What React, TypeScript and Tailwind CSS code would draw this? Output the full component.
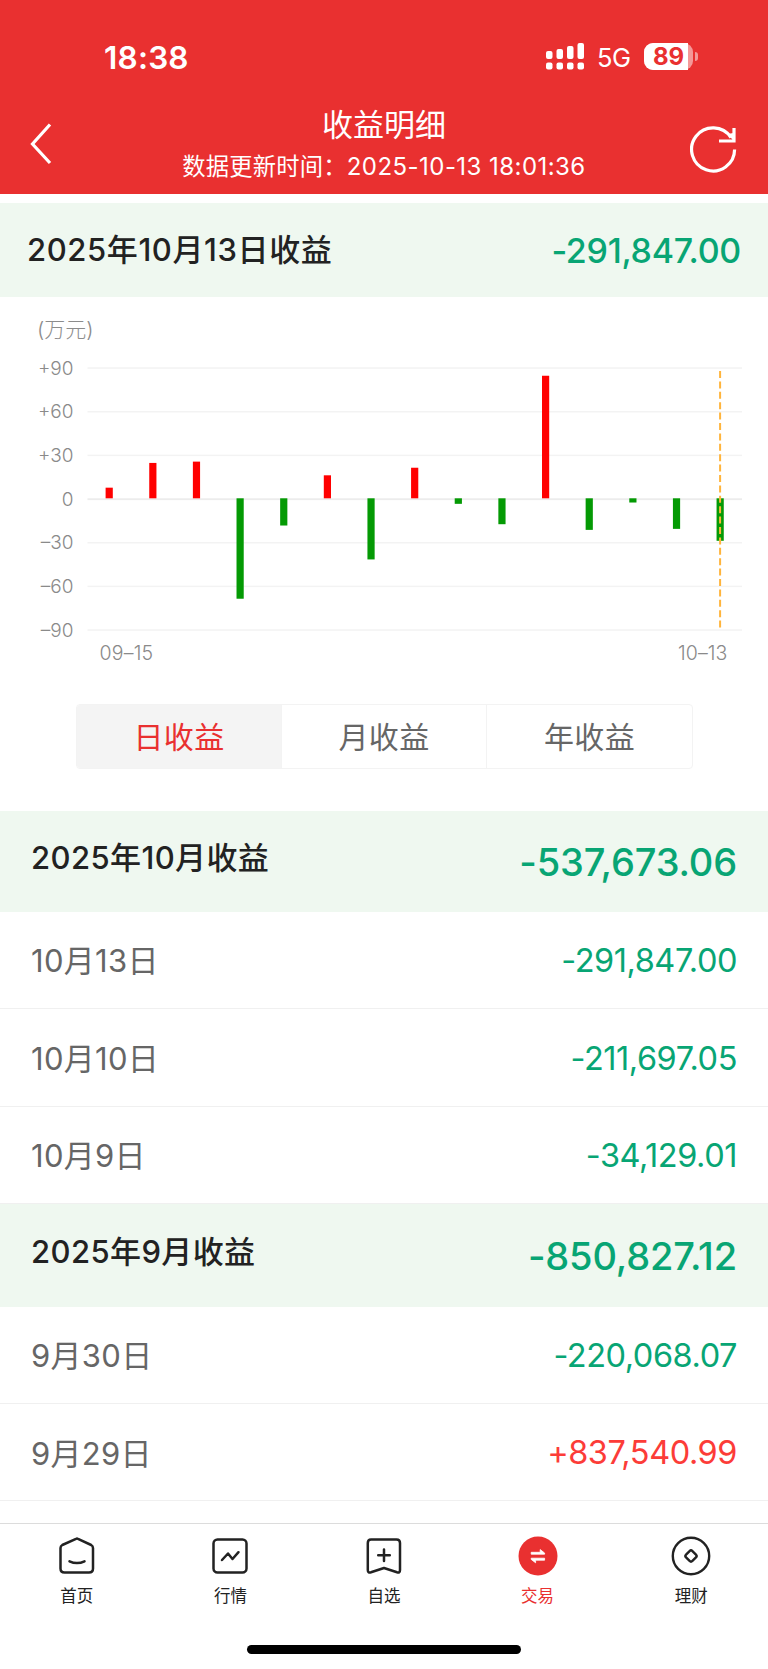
import { useState } from 'react';

interface DayRow {
  date: string;
  amount: string;
}

interface MonthGroup {
  title: string;
  total: string;
  height: string;
  days: DayRow[];
}

const groups: MonthGroup[] = [
  {
    title: '2025年10月收益',
    total: '-537,673.06',
    height: 'h-[101px]',
    days: [
      { date: '10月13日', amount: '-291,847.00' },
      { date: '10月10日', amount: '-211,697.05' },
      { date: '10月9日', amount: '-34,129.01' },
    ],
  },
  {
    title: '2025年9月收益',
    total: '-850,827.12',
    height: 'h-[103px]',
    days: [
      { date: '9月30日', amount: '-220,068.07' },
      { date: '9月29日', amount: '+837,540.99' },
    ],
  },
];

// Daily profit, in units of 10,000 yuan
const dailyProfit = [7.3, 24.3, 25.2, -69, -18.7, 15.8, -42, 21, -3.8, -17.8, 84.2, -21.7, -2.9, -21, -29.2];

const levels = [90, 60, 30, 0, -30, -60, -90];

const tabs = ['日收益', '月收益', '年收益'];

const amountColor = (amount: string) => (amount.startsWith('+') ? 'text-[#fc3c38]' : 'text-[#08a574]');

const StatusBar = () => (
  <div className="flex h-[96px] items-start justify-between pl-[104px] pr-[70px]">
    <span className="mt-[38px] text-[31.5px] leading-[39px] font-semibold tracking-[0.2px]">18:38</span>
    <div className="mt-[43px] flex h-[27px] items-center">
      <svg width="38" height="27" viewBox="0 0 38 27" fill="#fff">
        <rect x="0" y="8" width="6.5" height="8" rx="2" />
        <rect x="10.5" y="6" width="6.5" height="10" rx="2" />
        <rect x="21" y="3" width="6.5" height="13" rx="2" />
        <rect x="31.5" y="0" width="6.5" height="16" rx="2" />
        <rect x="0" y="19.5" width="6.5" height="7" rx="2" />
        <rect x="10.5" y="19.5" width="6.5" height="7" rx="2" />
        <rect x="21" y="19.5" width="6.5" height="7" rx="2" />
        <rect x="31.5" y="19.5" width="6.5" height="7" rx="2" />
      </svg>
      <span className="ml-[13px] w-[35px] pt-[2px] text-[25.5px] leading-[27px] tracking-[-0.5px]">5G</span>
      <div className="ml-[12px] flex h-[27px] w-[49px] rounded-[9px] bg-white/50">
        <div className="h-[27px] w-[44px] rounded-l-[9px] bg-white pl-[5px] text-center text-[24px] leading-[27px] font-bold text-[#e93030]">
          89
        </div>
      </div>
      <div className="ml-[2px] h-[9px] w-[3px] rounded-r-full bg-white/50" />
    </div>
  </div>
);

const Header = () => (
  <header className="h-[194px] bg-[#e93030] text-white">
    <StatusBar />
    <div className="flex justify-between">
      <svg className="mt-[26px] ml-[29px]" width="24" height="44" viewBox="0 0 24 44" fill="none" stroke="#fff" strokeWidth="3.2">
        <path d="M21 2.5 3.5 22 21 41" />
      </svg>
      <div className="flex flex-col items-center pl-[25px]">
        <h1 className="mt-[8px] text-[31px] leading-[41px]">收益明细</h1>
        <p className="mt-[4px] flex text-[23.3px] leading-[35px] tracking-[0.2px] whitespace-nowrap">
          数据更新时间：
          <span className="text-[24px] tracking-[0.45px]">2025-10-13 18:01:36</span>
        </p>
      </div>
      <svg className="mt-[28px] mr-[30px]" width="48" height="50" viewBox="0 0 48 50" fill="none" stroke="#fff" strokeWidth="3.2">
        <path d="M44.6 25.5A21.5 21.5 0 1 1 41 13.5" />
        <path d="M44 4V17H29" />
        <path d="M37 10 43.5 9V16.5Z" fill="#fff" stroke="none" />
      </svg>
    </div>
  </header>
);

const ProfitChart = () => {
  const zero = 154.2;
  const unit = 1.4555;
  return (
    <section className="h-[407px] pt-[17px]">
      <div className="pl-[37px] text-[21px] leading-[32px] font-light text-[#8c8c8c]">(万元)</div>
      <svg width="768" height="325" viewBox="0 0 768 325" className="-mt-px font-light">
        {levels.map((level) => (
          <g key={level}>
            <rect
              x="87.5"
              y={zero - level * unit - 0.9}
              width="654.5"
              height={level === 0 ? 1.8 : 1.5}
              fill={level === 0 ? '#ececec' : '#f3f3f3'}
            />
            <text x="73.5" y={zero - level * unit + 6.5} textAnchor="end" fontSize="19" fill="#8a8a8a">
              {level > 0 ? `+${level}` : level < 0 ? `–${-level}` : '0'}
            </text>
          </g>
        ))}
        {dailyProfit.map((value, i) => (
          <rect
            key={i}
            x={105.6 + i * 43.64}
            y={value > 0 ? zero - 0.9 - value * unit : zero - 0.9}
            width="7.2"
            height={Math.abs(value) * unit}
            fill={value > 0 ? '#ff0000' : '#049a04'}
          />
        ))}
        <line x1="720.1" y1="26" x2="720.1" y2="284.5" stroke="#ffb43c" strokeWidth="2" strokeDasharray="7 3.4" />
        <text x="99.5" y="315.2" fontSize="19.5" letterSpacing="0.2" fill="#8a8a8a">09–15</text>
        <text x="727.5" y="315.2" fontSize="19.5" letterSpacing="0.1" fill="#8a8a8a" textAnchor="end">10–13</text>
      </svg>
    </section>
  );
};

const HomeIcon = () => (
  <svg width="40" height="40" viewBox="0 0 40 40" fill="none" stroke="#222" strokeWidth="2.5" strokeLinecap="round" strokeLinejoin="round">
    <path d="M19 2.8Q20 2.3 21 2.8L34.2 9Q36 10 36 12V32.5Q36 36.5 32 36.5H7.5Q3.5 36.5 3.5 32.5V12Q3.5 10 5.3 9Z" />
    <path d="M12.5 25.3Q20 28.8 27.5 25.3" />
  </svg>
);

const MarketIcon = () => (
  <svg width="40" height="40" viewBox="0 0 40 40" fill="none" stroke="#222" strokeWidth="2.5" strokeLinecap="round" strokeLinejoin="round">
    <rect x="3.5" y="3.5" width="33" height="33" rx="4" />
    <path d="M12 24 18 17.5 22.5 23 28.5 16.2" />
  </svg>
);

const WatchIcon = () => (
  <svg width="40" height="40" viewBox="0 0 40 40" fill="none" stroke="#222" strokeWidth="2.5" strokeLinecap="round" strokeLinejoin="round">
    <path d="M7 3.5H32.5Q36 3.5 36 7V34Q36 37.2 33 36.3L20 32 7 36.3Q3.8 37.2 3.8 34V7Q3.8 3.5 7 3.5Z" />
    <path d="M20 13.5V25M14.2 19.3H25.8" />
  </svg>
);

const TradeIcon = () => (
  <svg width="40" height="40" viewBox="0 0 40 40">
    <circle cx="20" cy="20" r="19.5" fill="#e93030" />
    <g fill="#fff" stroke="#fff" strokeWidth="0.8" strokeLinejoin="round">
      <path d="M13.2 16.3H22.2V13.6L26.6 17V18.2H13.2Z" />
      <path d="M26.6 22.2H13.2V23.4L17.6 26.8V24.2H26.6Z" />
    </g>
  </svg>
);

const WealthIcon = () => (
  <svg width="40" height="40" viewBox="0 0 40 40" fill="none" stroke="#222" strokeWidth="2.4">
    <circle cx="20" cy="20" r="18.2" />
    <rect x="15.5" y="15.5" width="9" height="9" rx="2" transform="rotate(45 20 20)" />
  </svg>
);

const navItems = [
  { label: '首页', Icon: HomeIcon },
  { label: '行情', Icon: MarketIcon },
  { label: '自选', Icon: WatchIcon },
  { label: '交易', Icon: TradeIcon },
  { label: '理财', Icon: WealthIcon },
];

const App: React.FC = () => {
  const [activeTab, setActiveTab] = useState('日收益');

  return (
    <div className="flex h-[1669px] w-[768px] flex-col overflow-hidden bg-white font-['Inter','Noto_Sans_CJK_SC',sans-serif] text-[#222]">
      <Header />

      {/* Selected day */}
      <div className="mt-[9px] flex h-[94px] shrink-0 items-center justify-between bg-[#eff8f0] px-[27px]">
        <span className="text-[31px] font-medium tracking-[0.6px]">2025年10月13日收益</span>
        <span className="text-[34px] font-medium tracking-[-0.3px] text-[#08a574]">-291,847.00</span>
      </div>

      <ProfitChart />

      {/* Period tabs */}
      <div className="mx-auto grid h-[65px] w-[617px] shrink-0 grid-cols-3 divide-x divide-[#f3f3f3] overflow-hidden rounded-[4px] border border-[#f3f3f3]">
        {tabs.map((tab) => (
          <button
            key={tab}
            onClick={() => setActiveTab(tab)}
            className={`pt-px pl-px text-[30px] tracking-[0.3px] ${activeTab === tab ? 'bg-[#f4f4f4] text-[#e93030]' : 'text-[#666]'}`}
          >
            {tab}
          </button>
        ))}
      </div>

      {/* Monthly list */}
      <div className="mt-[42px] min-h-0 flex-1 overflow-hidden">
        {groups.map((group) => (
          <div key={group.title}>
            <div className={`flex items-center justify-between bg-[#eff8f0] px-[31px] ${group.height}`}>
              <span className="pb-[6px] text-[31px] font-medium tracking-[0.4px]">{group.title}</span>
              <span className="pt-[2px] text-[38px] font-medium tracking-[-0.15px] text-[#08a574]">{group.total}</span>
            </div>
            {group.days.map((day) => (
              <div
                key={day.date}
                className="flex h-[97.3px] items-center justify-between border-b border-[#f0f0f0] px-[31px] pt-[3px]"
              >
                <span className="text-[31px] tracking-[0.3px] text-[#666]">{day.date}</span>
                <span className={`text-[32.5px] tracking-[-0.45px] ${amountColor(day.amount)}`}>{day.amount}</span>
              </div>
            ))}
          </div>
        ))}
      </div>

      {/* Bottom navigation */}
      <nav className="flex h-[146px] shrink-0 flex-col items-center border-t border-[#dcdcdc]">
        <div className="grid w-full grid-cols-5 pt-[12px]">
          {navItems.map(({ label, Icon }) => (
            <div key={label} className="flex flex-col items-center">
              <Icon />
              <span className={`mt-[7px] text-[16.5px] leading-[26px] ${label === '交易' ? 'text-[#e93030]' : ''}`}>{label}</span>
            </div>
          ))}
        </div>
        <div className="mt-[36px] h-[9px] w-[274px] rounded-full bg-black" />
      </nav>
    </div>
  );
};

export default App;
